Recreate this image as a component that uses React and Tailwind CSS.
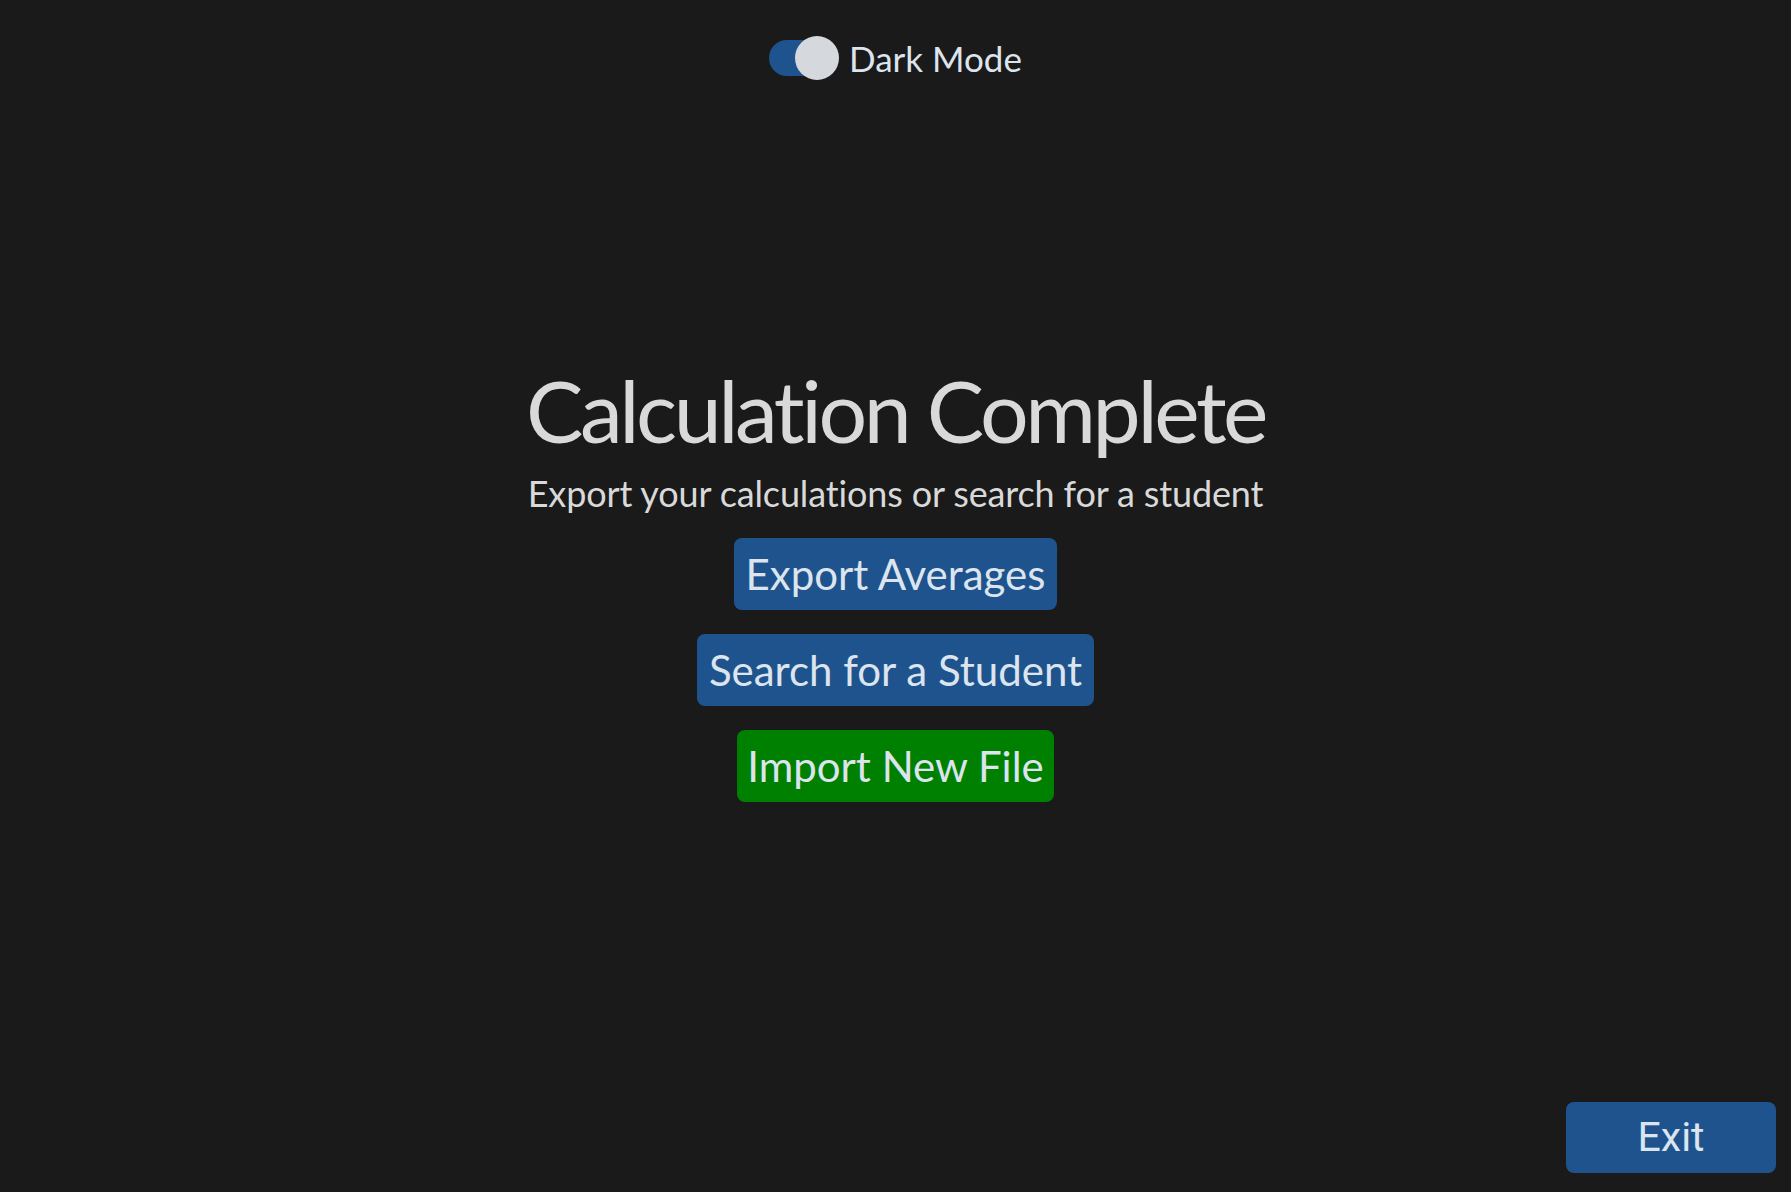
import React, { useState } from "react";

const DarkModeSwitch = ({ on, onToggle }) => {
  return (
    <button onClick={onToggle} className="flex items-center gap-[10px]">
      <span className="relative block w-[70px] h-[44px]">
        <span className="absolute left-0 top-[4px] w-[64px] h-[36px] rounded-full bg-[#1f538d]" />
        <span className="absolute right-0 top-0 w-[44px] h-[44px] rounded-full bg-[#d5d9de]" />
      </span>
      <span className="text-[35px] text-[#dce4ee] leading-none">Dark Mode</span>
    </button>
  );
};

const App = () => {
  const [dark, setDark] = useState(true);

  return (
    <div
      className="min-h-[1192px] flex flex-col bg-[#1a1a1a] text-[#dce4ee] [font-variant-ligatures:none]"
      style={{ fontFamily: "Lato, 'Open Sans', sans-serif" }}
    >
      {/* Barra superior */}
      <div className="flex justify-center pt-[36px]">
        <DarkModeSwitch on={dark} onToggle={() => setDark(!dark)} />
      </div>

      {/* Contenido central */}
      <div className="flex flex-col items-center mt-[287px]">
        <h1 className="text-[86px] leading-none text-[#d9d9d9] tracking-[-0.04em]">
          Calculation Complete
        </h1>
        <p className="mt-[22px] text-[36px] leading-none text-[#d9d9d9] tracking-[-0.004em]">
          Export your calculations or search for a student
        </p>

        <div className="flex flex-col items-center gap-[24px] mt-[27px]">
          <button className="h-[72px] px-[12px] rounded-[8px] bg-[#1f538d] text-[42px] text-[#dce4ee]">
            Export Averages
          </button>
          <button className="h-[72px] px-[12px] rounded-[8px] bg-[#1f538d] text-[42px] text-[#dce4ee]">
            Search for a Student
          </button>
          <button className="h-[72px] px-[10px] rounded-[8px] bg-[#008000] text-[42px] text-[#dce4ee]">
            Import New File
          </button>
        </div>
      </div>

      {/* Salir */}
      <div className="mt-auto flex justify-end pr-[15px] pb-[19px]">
        <button
          className="w-[210px] h-[71px] rounded-[8px] bg-[#1f538d] text-[41px] text-[#dce4ee]"
          style={{ fontFamily: "Roboto, sans-serif" }}
        >
          Exit
        </button>
      </div>
    </div>
  );
};

export default App;
